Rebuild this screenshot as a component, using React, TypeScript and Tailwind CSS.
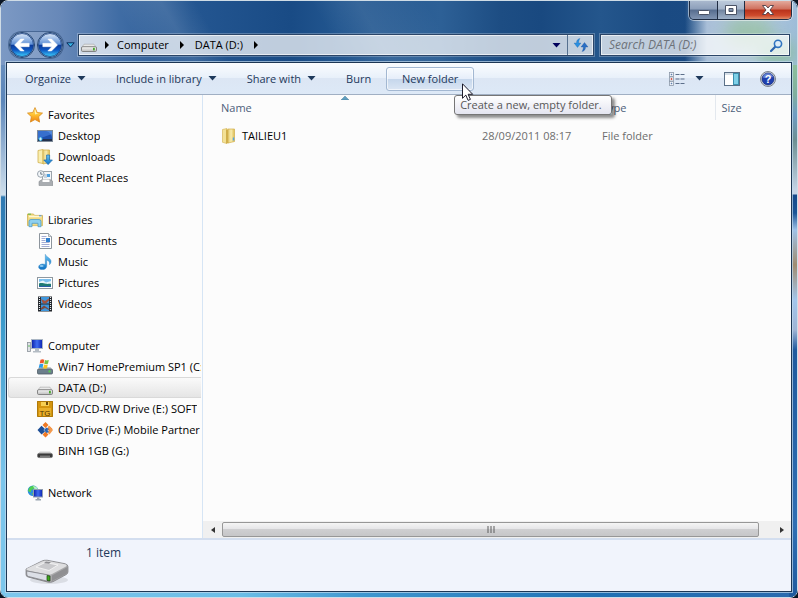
import type { ReactNode } from "react";

type NavItem = { label: string; icon: ReactNode; selected?: boolean };
type NavGroup = { label: string; icon: ReactNode; items: NavItem[] };

function Svg({ children }: { children: ReactNode }) {
  return (
    <svg viewBox="0 0 16 16" className="size-4 shrink-0" aria-hidden="true">
      {children}
    </svg>
  );
}

/* Shared gradients, referenced by id from the icons below */
function Defs() {
  return (
    <svg className="absolute size-0" aria-hidden="true">
      <defs>
        <linearGradient id="gold" x1="0" y1="0" x2="0" y2="1">
          <stop offset="0" stopColor="#fff3a0" />
          <stop offset="0.5" stopColor="#ffc02e" />
          <stop offset="1" stopColor="#f07f12" />
        </linearGradient>
        <linearGradient id="folder" x1="0" y1="0" x2="1" y2="0">
          <stop offset="0" stopColor="#e6cf78" />
          <stop offset="0.5" stopColor="#f8ebac" />
          <stop offset="1" stopColor="#dcbb50" />
        </linearGradient>
        <linearGradient id="sky" x1="0" y1="0" x2="0" y2="1">
          <stop offset="0" stopColor="#6cc6f5" />
          <stop offset="1" stopColor="#0e72c4" />
        </linearGradient>
        <linearGradient id="screen" x1="0" y1="0" x2="1" y2="0">
          <stop offset="0" stopColor="#0a1fa8" />
          <stop offset="0.5" stopColor="#3f6df0" />
          <stop offset="1" stopColor="#0b22b0" />
        </linearGradient>
        <linearGradient id="metal" x1="0" y1="0" x2="0" y2="1">
          <stop offset="0" stopColor="#f7f7f7" />
          <stop offset="1" stopColor="#bdbdbd" />
        </linearGradient>
        <linearGradient id="orbTop" x1="0" y1="0" x2="0" y2="1">
          <stop offset="0" stopColor="#dbe8f8" />
          <stop offset="0.47" stopColor="#5d8fd6" />
          <stop offset="0.5" stopColor="#0c3a99" />
          <stop offset="0.72" stopColor="#0e58c4" />
          <stop offset="1" stopColor="#3fd0fb" />
        </linearGradient>
      </defs>
    </svg>
  );
}

const StarIcon = () => (
  <Svg>
    <path d="M8 .6l2.2 4.9 5.3.6-3.9 3.6 1 5.4L8 12.5l-4.6 2.6 1-5.4L.5 6.1l5.3-.6z" fill="url(#gold)" stroke="#d98a1c" strokeWidth="0.8" />
    <path d="M8 2.4l1.5 3.8 2.2.4-3.7 1z" fill="#fffbd8" opacity="0.8" />
  </Svg>
);

const DesktopIcon = () => (
  <Svg>
    <rect x="0.5" y="2.5" width="15" height="11" fill="#1d4fae" stroke="#7f8b99" />
    <path d="M1 3h14v3L1 11z" fill="#3f77d4" opacity="0.8" />
    <path d="M9 3h6v8c0-4-2-7-6-8z" fill="#6ba0ea" opacity="0.5" />
    <rect x="1" y="11" width="14" height="2" fill="#23324d" />
    <circle cx="3.5" cy="11" r="2" fill="#35b1e8" />
    <path d="M3.5 9.5v3M2 11h3" stroke="#fff" strokeWidth="0.7" />
  </Svg>
);

const DownloadsIcon = () => (
  <Svg>
    <path d="M1 1.5L6 .5v14l-5-1z" fill="#f9eeb0" stroke="#d2b04c" strokeWidth="0.8" />
    <path d="M6 1h6.5v12.5L6 15z" fill="url(#folder)" stroke="#d2b04c" strokeWidth="0.8" />
    <path d="M9.6 6h3v5h2.8l-4.3 4.6L6.8 11h2.8z" fill="url(#sky)" stroke="#1767ae" strokeWidth="0.7" />
  </Svg>
);

const RecentIcon = () => (
  <Svg>
    <rect x="5.5" y="1.5" width="9" height="10" fill="#f4f6f8" stroke="#9ba3aa" />
    <path d="M7 5h3M7 7h3" stroke="#9ab0c4" />
    <rect x="10" y="4" width="3" height="3" fill="#4a9fe0" />
    <path d="M2 11.5l3-2h8l3 2v4H2z" fill="#a9adb1" stroke="#8a8e92" strokeWidth="0.6" />
    <path d="M5.5 9.500h7v2.5h-7z" fill="#fff" />
    <circle cx="3.8" cy="4" r="3.3" fill="#f2f6f9" stroke="#9aa4ad" />
    <path d="M3.8 2v2.2h1.8" fill="none" stroke="#4a5a68" strokeWidth="0.8" />
  </Svg>
);

const LibrariesIcon = () => (
  <Svg>
    <path d="M.5 2h6l1 1.4h8v10.2H.5z" fill="#f3dd86" stroke="#cfae4d" strokeWidth="0.8" />
    <path d="M2 4.5h12.4" stroke="#fdf8d6" strokeWidth="1.4" />
    <path d="M1 2.2h3" stroke="#5eb946" />
    <path d="M12 3.8h2.5" stroke="#4a8edb" />
    <path d="M.9 6.2h14.4v7H.9z" fill="#f1d982" />
    <path d="M2 14.7V9.5Q2 7.5 4 7.5h8q2 0 2 2v5.2h-3v-3.4H5v3.4z" fill="#8fd0ee" stroke="#4f9cc9" strokeWidth="0.8" />
  </Svg>
);

const DocumentIcon = () => (
  <Svg>
    <path d="M2.5.5h9l3 3v12h-12z" fill="#fff" stroke="#8d959d" />
    <path d="M11.5.5v3h3" fill="#dfe5ea" stroke="#8d959d" strokeWidth="0.7" />
    <path d="M4.5 3.5h5M4.5 5.5h4M4.5 7.5h4M4.5 9.5h8M4.5 11.5h8M4.5 13.5h8" stroke="#9aa4d0" strokeWidth="0.9" />
    <rect x="9" y="5" width="4" height="4" fill="#2f80cf" />
  </Svg>
);

const MusicIcon = () => (
  <Svg>
    <path d="M8.3.3c.5 2.6 4.800 3.400 5.600 6.200.4 1.600-.2 3.200-1.400 4.200.5-2.600-.6-4-2.800-4.700v6.200c0 2-1.900 3.400-4.400 3.400-2.400 0-3.700-1.200-3.700-2.600 0-1.800 2-3 4.100-3 1 0 1.900.2 2.600.5z" fill="url(#sky)" stroke="#2b7fbf" strokeWidth="0.4" />
    <ellipse cx="4.6" cy="12" rx="2" ry="1.1" fill="#b9e6fb" opacity="0.7" />
  </Svg>
);

const PicturesIcon = () => (
  <Svg>
    <rect x="0.5" y="2.5" width="15" height="11" fill="#fff" stroke="#8f989f" />
    <rect x="2" y="4" width="12" height="8" fill="#7cc0ee" />
    <path d="M2 7l4-1.5 3 2L14 6v3H2z" fill="#e8f5fb" />
    <path d="M2 8.5c2-1 5 0 7 .3s4-.3 5 .2v3H2z" fill="#1f7b74" />
    <path d="M2 11h12v1H2z" fill="#2a5ea8" />
  </Svg>
);

const VideosIcon = () => (
  <Svg>
    <rect x="1" y="0.5" width="14" height="15" fill="#23272c" />
    <path d="M2.5 1v14M13.5 1v14" stroke="#e6eaee" strokeWidth="1.2" strokeDasharray="1 1" />
    <rect x="4" y="1" width="8" height="6.5" fill="#3f97dd" />
    <rect x="4" y="8.5" width="8" height="6.5" fill="#3f97dd" />
    <path d="M4 3l4 2 4-2.500v2L9 7.500H6z" fill="#a3523f" />
    <path d="M4 12l3-2.500 5 3.500v1L8 12l-4 2z" fill="#7d4a40" />
  </Svg>
);

const ComputerIcon = () => (
  <Svg>
    <rect x="0.5" y="4.5" width="3" height="9" fill="#dfe3e6" stroke="#8b9299" strokeWidth="0.8" />
    <path d="M1.2 8h1.6" stroke="#3fae3a" strokeWidth="1.2" />
    <rect x="4.5" y="1.5" width="11" height="9" fill="url(#screen)" stroke="#aab6c4" />
    <path d="M8 11h4v2H8zM6 13h8v1.5H6z" fill="#b4bcc4" />
  </Svg>
);

const SystemDriveIcon = () => (
  <Svg>
    <path d="M2.5 8.2h11l2 2.6H.5z" fill="#aab4bc" />
    <rect x="0.5" y="10.2" width="15" height="4.8" rx="1" fill="#6c7f8c" stroke="#4f5c66" strokeWidth="0.8" />
    <rect x="11.5" y="11.4" width="2" height="2" fill="#58d44a" />
    <path d="M3.500 .8c1.500-.8 2.600-.7 3.800 0l-.8 3.700c-1.200-.7-2.400-.7-3.800 0z" fill="#f0562a" />
    <path d="M8 1.100c1.200.6 2.400.6 3.800 0L11 4.800c-1.400.6-2.600.6-3.800 0z" fill="#7cc142" />
    <path d="M2.500 5.200c1.400-.7 2.600-.7 3.800 0l-.8 3.700c-1.200-.7-2.400-.7-3.800 0z" fill="#2e9be6" />
    <path d="M7 5.500c1.300.6 2.500.6 3.800 0L10 9.200c-1.300.6-2.500.6-3.800 0z" fill="#fcc21f" />
  </Svg>
);

const DriveIcon = () => (
  <Svg>
    <path d="M3 7.200h10l2.500 3.600H.5z" fill="#e9e9e9" stroke="#a6a6a6" strokeWidth="0.6" />
    <rect x="0.5" y="9.700" width="15" height="4.800" rx="1.2" fill="url(#metal)" stroke="#7b7b7b" strokeWidth="0.9" />
    <rect x="12" y="10.800" width="1.800" height="2.600" fill="#46a92c" />
  </Svg>
);

const DvdIcon = () => (
  <Svg>
    <path d="M0 0h16v16H1l-1-1z" fill="#d4950e" />
    <path d="M4 0h8v5H4z" fill="#f7cf52" />
    <path d="M9 1h2v3H9z" fill="#6d4a08" />
    <path d="M2 7h12v9H2z" fill="#e9b02a" />
    <text x="8" y="14.500" textAnchor="middle" fontSize="8" fontFamily="Liberation Sans, sans-serif" fill="#4a3105">
      TG
    </text>
    <path d="M.5.5h15v15H.5z" fill="none" stroke="#b07a0a" />
  </Svg>
);

const CdIcon = () => (
  <Svg>
    <path d="M8.500 0l3 3-3 3-3-3zM12.500 4l3 3-3 3-2-3zM8.500 9.500l3 3-3 3-3-3z" fill="#f07a24" />
    <path d="M12 3.500L16 8l-3.500 4.500-2-2L13 8l-2.500-2.500z" fill="#f39a4e" />
    <path d="M4.500 3.800L8 7l-1.500 1L8 9.500l-3.500 3L0.500 8z" fill="#1f4f96" />
    <path d="M9.500 5.500L12 7l-1.500 1 1.500 2-2.500 1L7 8z" fill="#2b65b3" />
  </Svg>
);

const UsbIcon = () => (
  <Svg>
    <path d="M3 8.400h10l2.500 2.800H.5z" fill="#cfcfcf" />
    <rect x="0.500" y="10.400" width="15" height="4.200" rx="1.500" fill="#3a3a3a" stroke="#777" strokeWidth="0.8" />
    <path d="M3 13.200h10" stroke="#999" />
  </Svg>
);

const NetworkIcon = () => (
  <Svg>
    <circle cx="6" cy="5.800" r="5.300" fill="#2c8fe0" />
    <path d="M2 3c2-2 4-2.500 6-2L6.500 4l-2 1-1 2.500L1 6zM4.500 8l3 .5-1 2.500z" fill="#4fcf52" />
    <path d="M6 1c2 0 4 1 4.800 2.500L8 5z" fill="#b9f0c0" />
    <rect x="6.500" y="4.500" width="9" height="7.500" fill="url(#screen)" stroke="#8f9db0" />
    <path d="M10 12.500h2.500V14h1.500v1.500H8.500V14H10z" fill="#98a3b0" />
  </Svg>
);

const FolderIcon = () => (
  <Svg>
    <path d="M1.500 1.500L6 .5v15l-4.500-1.200z" fill="#f3e196" stroke="#d8b95c" strokeWidth="0.7" />
    <path d="M5 1.500h3V15l-3 .500z" fill="#cfae4a" />
    <path d="M7 1h6.500v12.500L7 15z" fill="url(#folder)" stroke="#d2b04c" strokeWidth="0.7" />
    <path d="M12.500 9.500v3" stroke="#4fa4e8" strokeWidth="1.400" />
  </Svg>
);

const Caret = ({ className }: { className: string }) => (
  <svg viewBox="0 0 9 5" className={`h-[5px] w-[9px] shrink-0 ${className}`} aria-hidden="true">
    <path d="M.5 0h8l-4 4.500z" fill="currentColor" />
  </svg>
);

const Chevron = () => (
  <svg viewBox="0 0 4 8" className="h-2 w-1 shrink-0" aria-hidden="true">
    <path d="M0 0v8l4-4z" fill="#000" />
  </svg>
);

const groups: NavGroup[] = [
  {
    label: "Favorites",
    icon: <StarIcon />,
    items: [
      { label: "Desktop", icon: <DesktopIcon /> },
      { label: "Downloads", icon: <DownloadsIcon /> },
      { label: "Recent Places", icon: <RecentIcon /> },
    ],
  },
  {
    label: "Libraries",
    icon: <LibrariesIcon />,
    items: [
      { label: "Documents", icon: <DocumentIcon /> },
      { label: "Music", icon: <MusicIcon /> },
      { label: "Pictures", icon: <PicturesIcon /> },
      { label: "Videos", icon: <VideosIcon /> },
    ],
  },
  {
    label: "Computer",
    icon: <ComputerIcon />,
    items: [
      { label: "Win7 HomePremium SP1 (C:)", icon: <SystemDriveIcon /> },
      { label: "DATA (D:)", icon: <DriveIcon />, selected: true },
      { label: "DVD/CD-RW Drive (E:) SOFT", icon: <DvdIcon /> },
      { label: "CD Drive (F:) Mobile Partner", icon: <CdIcon /> },
      { label: "BINH 1GB (G:)", icon: <UsbIcon /> },
    ],
  },
  { label: "Network", icon: <NetworkIcon />, items: [] },
];

const files = [{ name: "TAILIEU1", modified: "28/09/2011 08:17", type: "File folder" }];

function Wallpaper() {
  return (
    <div className="absolute inset-0 overflow-hidden bg-[#1d4f88]">
      {/* Side and bottom edges */}
      <div className="absolute inset-y-0 left-0 w-2 bg-[linear-gradient(180deg,#7d9bc4_0,#5b86ba_100px,#cfdfec_194px,#2f79b2_196px,#3b9acb_320px,#7cc6ec_480px,#7cc6ec_100%)]" />
      <div className="absolute inset-x-0 bottom-0 h-2 bg-[linear-gradient(90deg,#7cc6ec_0,#6bbde6_30%,#3f97cf_45%,#1f70b4_75%,#2a6aae_100%)]" />
      {/* Glass behind the title and address bars */}
      <div className="absolute inset-x-0 top-0 h-16 bg-[linear-gradient(90deg,#7c99c4_0,#6788b8_60px,#3f6ca4_120px,#245691_190px,#194b85_290px,#235790_340px,#2d6096_440px,#1d4d83_500px,#194980_540px,#24568c_600px,#1a4a82_660px,#1d4d86_100%)]" />
      <div className="absolute inset-x-0 top-0 h-16 bg-[linear-gradient(60deg,transparent_130px,#ffffff1c_170px,transparent_200px,transparent_300px,#ffffff14_340px,transparent_400px)]" />
      <div className="absolute top-0 right-0 h-16 w-28 bg-[linear-gradient(90deg,#a9bfd800_0,#a9bfd8_22px,#b6cbdf_70px,#9dbcd8_100%)]" />
      <div className="absolute top-4 right-6 h-8 w-12 rounded-full bg-[#93bf9a] opacity-70 blur-sm" />
      <div className="absolute top-10 right-0 h-6 w-10 rounded-full bg-[#8abf9a] opacity-80 blur-sm" />
      <div className="absolute top-16 right-0 bottom-0 w-2 bg-[linear-gradient(180deg,#8dc09c_0,#7fae9e_30px,#6f9cc4_50px,#6d8f92_75px,#c3d3e6_125px,#c3d3e6_129px,#14498a_130px,#1b5596_148px,#9fc2e8_165px,#a08c70_200px,#a3c6ec_235px,#9fb4d4_265px,#1f5a9e_285px,#2f6fb4_460px,#1f5a9e_100%)]" />
    </div>
  );
}

function CaptionButtons() {
  return (
    <div className="flex h-[19px] overflow-hidden rounded-b-[5px] border border-t-0 border-[#1f2c42] shadow-[0_0_0_1px_#ffffff80]">
      <button aria-label="Minimize" className="grid w-7 place-items-center border-r border-[#1f2c42] bg-[linear-gradient(180deg,#a9b8cd_0,#8c9fba_45%,#566c8e_50%,#8195b2_100%)]">
        <svg viewBox="0 0 12 5" className="mt-1 h-[5px] w-3">
          <rect x="0.5" y="0.5" width="11" height="4" rx="1" fill="#fff" stroke="#4b5365" />
        </svg>
      </button>
      <button aria-label="Maximize" className="grid w-[27px] place-items-center border-r border-[#1f2c42] bg-[linear-gradient(180deg,#bccadb_0,#a4b4c9_45%,#71849f_50%,#9fb1c8_100%)]">
        <svg viewBox="0 0 12 10" className="h-[10px] w-3">
          <path d="M.5.5h11v9H.5zM4 3.500v3h4v-3z" fill="#fff" fillRule="evenodd" stroke="#4b5365" />
        </svg>
      </button>
      <button aria-label="Close" className="grid w-[46px] place-items-center bg-[linear-gradient(180deg,#e3aa9d_0,#cf6f5d_45%,#b8321b_50%,#cf4a2c_80%,#e08a66_100%)]">
        <svg viewBox="0 0 12 10" className="h-[10px] w-3">
          <path d="M.5.500h3.300L6 3l2.200-2.500h3.300L8 5l3.500 4.500H8.200L6 7 3.800 9.500H.5L4 5z" fill="#fff" stroke="#4b3b45" strokeWidth="0.9" />
        </svg>
      </button>
    </div>
  );
}

function NavOrb({ label, flip }: { label: string; flip?: boolean }) {
  return (
    <button aria-label={label} className="size-[26px] shrink-0">
      <svg viewBox="0 0 26 26" className={flip ? "size-full -scale-x-100" : "size-full"}>
        <circle cx="13" cy="13" r="12.500" fill="#b9cce4" stroke="#21426f" />
        <circle cx="13" cy="13" r="11.500" fill="url(#orbTop)" stroke="#173d80" strokeWidth="0.8" />
        <path d="M5.500 13l6-6h3.700l-4 4.300h9v3.400h-9l4 4.300h-3.700z" fill="#fff" stroke="#fff" strokeWidth="0.500" strokeLinejoin="round" />
      </svg>
    </button>
  );
}

function AddressBar() {
  return (
    <div className="flex items-center gap-[3px] pr-0.5 pl-[3px]">
      <div className="flex h-[26px] items-center gap-0.5 rounded-full bg-white/15 shadow-[0_0_0_1px_#1f406c80]">
        <NavOrb label="Back" />
        <NavOrb label="Forward" flip />
      </div>
      <button aria-label="Recent pages" className="grid h-6 w-[9px] place-items-center">
        <svg viewBox="0 0 9 6" className="h-[6px] w-[9px]">
          <path d="M.8.800h7.400L4.500 5z" fill="#38b4e6" stroke="#0c2d5c" />
        </svg>
      </button>
      <div className="flex h-[22px] flex-1 items-stretch border border-[#2b4568] bg-white/72 shadow-[inset_0_0_0_1px_#ffffffa0,0_0_0_1px_#ffffff40]">
        <div className="flex flex-1 items-center pl-0.5">
          <DriveIcon />
          <button aria-label="Locations" className="grid w-4 place-items-center pl-1">
            <Chevron />
          </button>
          <button className="pl-1">Computer</button>
          <button aria-label="Computer contents" className="grid w-[26px] place-items-center">
            <Chevron />
          </button>
          <button>DATA (D:)</button>
          <button aria-label="DATA (D:) contents" className="grid w-[26px] place-items-center">
            <Chevron />
          </button>
        </div>
        <button aria-label="Previous locations" className="grid w-[21px] place-items-center">
          <Caret className="text-[#00005c]" />
        </button>
        <button aria-label="Refresh" className="grid w-[26px] place-items-center border-l border-[#56708f]">
          <svg viewBox="0 0 16 16" className="size-4">
            <path d="M7 1.500C4.500 2 3.500 3.500 3.500 6H1l3.500 4.500L8 6H5.700c0-1.800.3-3 1.300-4.500z" fill="#2a8fe0" stroke="#1c5fa8" strokeWidth="0.300" />
            <path d="M9 14.500c2.500-.5 3.500-2 3.500-4.500H15l-3.500-4.500L8 10h2.300c0 1.800-.3 3-1.300 4.500z" fill="#2a6fc4" stroke="#174f98" strokeWidth="0.300" />
          </svg>
        </button>
      </div>
      <label className="ml-[3px] flex h-[22px] w-[190px] items-center border border-[#2b4568] bg-white/72 pr-1.5 pl-2 shadow-[inset_0_0_0_1px_#ffffffa0,0_0_0_1px_#ffffff40]">
        <input
          type="search"
          aria-label="Search DATA (D:)"
          placeholder="Search DATA (D:)"
          className="w-full min-w-0 bg-transparent text-[12px] italic outline-none placeholder:text-[#6d7279]"
        />
        <svg viewBox="0 0 13 13" className="size-[13px] shrink-0">
          <path d="M1 12l4.500-4.500" stroke="#2d64ad" strokeWidth="2.200" strokeLinecap="round" />
          <circle cx="8" cy="4.800" r="3.600" fill="#dcecf8" stroke="#2f74c0" strokeWidth="1.600" />
        </svg>
      </label>
    </div>
  );
}

function Toolbar() {
  const menus = ["Organize", "Include in library", "Share with"];
  return (
    <div className="flex h-8 shrink-0 items-center border-b border-[#a0afc3] bg-[linear-gradient(180deg,#fafcfe_0,#e8f0fa_48%,#dce6f4_50%,#dde9f7_100%)] pl-[3px] text-[#1e395b]">
      {menus.map((menu) => (
        <button key={menu} className="flex items-center gap-1.5 px-[15px]">
          {menu}
          <Caret className="text-[#1e395b]" />
        </button>
      ))}
      <button className="px-[15px]">Burn</button>
      <div className="relative">
        <button
          aria-describedby="new-folder-tip"
          className="h-6 w-[88px] rounded-[3px] border border-[#a3b8d2] bg-[linear-gradient(180deg,#f8fbfe_0,#e6eefa_48%,#c6d7ec_52%,#dbe6f4_100%)] shadow-[inset_0_0_0_1px_#ffffffa0]"
        >
          New folder
        </button>
        <div
          id="new-folder-tip"
          role="tooltip"
          className="absolute top-7 left-[68px] z-10 flex h-5 w-[158px] items-center rounded-[3px] border border-[#767676] bg-linear-to-b from-white to-[#e4e5f0] pl-[5px] whitespace-nowrap text-[#575757] shadow-[3px_3px_3px_#00000070]"
        >
          Create a new, empty folder.
        </div>
        <svg viewBox="0 0 12 19" className="absolute top-4 left-[76px] z-20 h-[19px] w-3" aria-hidden="true">
          <path d="M.5.800v14.500l3.300-3.200 2.300 5.300 2.300-1-2.300-5.100h4.600z" fill="#fff" stroke="#1c1c2c" />
        </svg>
      </div>
      <div className="ml-auto flex items-center pr-[15px]">
        <button aria-label="Change your view">
          <svg viewBox="0 0 16 14" className="h-[14px] w-4">
            {[0.5, 5, 9.5].map((y, i) => (
              <g key={y}>
                <rect x="0.500" y={y} width="4" height="4" fill="#fff" stroke="#8a97a8" strokeWidth="0.8" />
                <rect x="1.700" y={y + 1.2} width="1.600" height="1.600" fill={i === 1 ? "#c0392b" : "#5d7fae"} />
                <path d={`M6.500 ${y + 2}h4M11.500 ${y + 2}h4`} stroke="#5c6f8a" />
              </g>
            ))}
          </svg>
        </button>
        <button aria-label="More view options" className="px-2.5">
          <Caret className="text-[#1e395b]" />
        </button>
        <button aria-label="Show the preview pane" className="ml-2.5">
          <svg viewBox="0 0 16 14" className="h-[14px] w-4">
            <rect x="0.500" y="0.500" width="15" height="13" fill="#fff" stroke="#5b7088" />
            <path d="M1 2h14" stroke="#c8d4e0" strokeWidth="1.500" />
            <rect x="9.500" y="1.500" width="5" height="11" fill="#7fd0e8" stroke="#3b8fae" />
          </svg>
        </button>
        <button aria-label="Get help" className="ml-5">
          <svg viewBox="0 0 16 16" className="size-4">
            <circle cx="8" cy="8" r="7.500" fill="#d5d9df" stroke="#6f7682" strokeWidth="0.9" />
            <circle cx="8" cy="8" r="6" fill="#1f3fae" stroke="#122a78" strokeWidth="0.7" />
            <path d="M2.800 6.500a5.300 5.300 0 0 1 10.400 0C10 5 6 8 2.800 6.500z" fill="#7d9be6" opacity="0.7" />
            <text x="8" y="12" textAnchor="middle" fontSize="11" fontWeight="700" fontFamily="Liberation Sans, sans-serif" fill="#fff">
              ?
            </text>
          </svg>
        </button>
      </div>
    </div>
  );
}

function NavPane() {
  return (
    <nav className="flex w-[196px] shrink-0 flex-col gap-[21px] border-r border-[#d6e5f5] pt-[9px] pr-px pl-px">
      {groups.map((group) => (
        <div key={group.label}>
          <a href="#" className="flex h-[21px] items-center gap-[5px] pl-[19px]">
            {group.icon}
            {group.label}
          </a>
          {group.items.map((item) => (
            <a
              key={item.label}
              href="#"
              className={
                item.selected
                  ? "flex h-[21px] items-center gap-[5px] rounded-l-[3px] border border-r-0 border-[#d9d9d9] bg-linear-to-b from-[#fafafa] to-[#e5e5e5] pl-7"
                  : "flex h-[21px] items-center gap-[5px] pl-[29px]"
              }
            >
              {item.icon}
              <span className="overflow-hidden whitespace-nowrap">{item.label}</span>
            </a>
          ))}
        </div>
      ))}
    </nav>
  );
}

function FileList() {
  return (
    <main className="flex min-w-0 flex-1 flex-col">
      <div className="flex-1 pl-2.5">
        <table className="w-full table-fixed text-left">
          <colgroup>
            <col />
            <col className="w-[120px]" />
            <col className="w-[120px]" />
            <col className="w-[76px]" />
          </colgroup>
          <thead className="text-[#4c607a]">
            <tr className="h-[25px]">
              <th className="relative pl-2 font-normal">
                Name
                <svg viewBox="0 0 8 4" className="absolute top-px left-[49%] h-1 w-2">
                  <path d="M4 0l4 4H0z" fill="#5f9fc0" stroke="#3c6f8d" strokeWidth="0.4" />
                </svg>
              </th>
              <th aria-label="Date modified" />
              <th className="pl-[7px] font-normal">Type</th>
              <th className="border-l border-[#e3e8ee] pl-1.5 font-normal">Size</th>
            </tr>
          </thead>
          <tbody>
            {files.map((file) => (
              <tr key={file.name} className="h-8 text-[#6d6d6d]">
                <td className="pl-2 text-black">
                  <span className="flex items-center gap-[5px]">
                    <FolderIcon />
                    {file.name}
                  </span>
                </td>
                <td className="pl-[7px]">{file.modified}</td>
                <td className="pl-[7px]">{file.type}</td>
                <td />
              </tr>
            ))}
          </tbody>
        </table>
      </div>

      {/* Horizontal scroll bar */}
      <div className="flex h-[17px] items-center bg-[#f0f0f0]">
        <button aria-label="Scroll left" className="grid w-[19px] place-items-center">
          <svg viewBox="0 0 4 6" className="h-1.5 w-1">
            <path d="M4 0v6L0 3z" fill="#333" />
          </svg>
        </button>
        <div className="mr-[14px] grid h-[15px] flex-1 place-items-center rounded-[2px] border border-[#979797] bg-[linear-gradient(180deg,#f5f5f5_0,#e6e6e8_45%,#cfcfd1_50%,#c6c6c8_100%)]">
          <svg viewBox="0 0 8 7" className="h-[7px] w-2">
            <path d="M1 0v7M4 0v7M7 0v7" stroke="#5c5c5c" />
          </svg>
        </div>
        <button aria-label="Scroll right" className="grid w-[18px] place-items-center">
          <svg viewBox="0 0 4 6" className="h-1.5 w-1">
            <path d="M0 0v6l4-3z" fill="#333" />
          </svg>
        </button>
      </div>
    </main>
  );
}

function DetailsPane() {
  return (
    <footer className="flex h-[53px] shrink-0 gap-4 border-t-2 border-[#d3deef] bg-[#f1f4fc] pl-[17px] text-[12px] text-[#1e395b]">
      <svg viewBox="0 0 46 30" className="mt-4 h-[30px] w-[46px]" aria-hidden="true">
        <ellipse cx="25" cy="24" rx="19" ry="4" fill="#00000018" />
        <path d="M2 13L18 5q2-1 5-.800l18 3.500q3 .800 3 3v5q0 2-2 3l-13 7q-2 1-5 .500L4 21q-2-.500-2-2.500z" fill="#a9a9ab" stroke="#77777a" strokeWidth="0.700" />
        <path d="M3 12.500L18 5.400q2-1 5-.600l18 3.500q3 1 .500 2.500L28 18q-2 1-5 .500L4 14.500q-2.500-.700-1-2z" fill="#dedee0" />
        <path d="M12 11l9-4.500 13 2.500-9 5.500z" fill="#c9c9cc" stroke="#f8f8f8" strokeWidth="0.800" />
        <path d="M22 5.500l5 .8-2 1.500-5-.8z" fill="#8e8e92" />
        <path d="M2.700 15l22 4v6.500L4.500 20.500Q2.700 20 2.700 18z" fill="#dcdfe6" stroke="#77777c" strokeWidth="0.700" />
        <path d="M28 19.500L43.500 11v4.500q0 1.500-1.500 2.500l-14 7z" fill="#8f8f92" />
        <path d="M23 19.500l3 .500v5l-3-.600z" fill="#3faa1e" stroke="#1c3d12" strokeWidth="0.700" />
      </svg>
      <p className="pt-[5px]">1 item</p>
    </footer>
  );
}

export default function App() {
  return (
    <div className="bg-[#0a1524]">
      <Defs />
      <div className="relative flex min-h-screen flex-col overflow-hidden rounded-lg border border-[#cfdce6] font-['Open_Sans','Noto_Sans',sans-serif] text-[11px] leading-4 text-black">
        <Wallpaper />
        <div className="relative flex flex-1 flex-col px-[5px] pb-[5px]">
          <header className="flex h-[61px] flex-col">
            <div className="flex justify-end">
              <CaptionButtons />
            </div>
            <div className="pt-3">
              <AddressBar />
            </div>
          </header>
          <div className="flex flex-1 flex-col border border-[#1c3654] bg-[#fcfcfc] shadow-[0_0_0_1px_#c4dbeeb0]">
            <Toolbar />
            <div className="flex flex-1">
              <NavPane />
              <FileList />
            </div>
            <DetailsPane />
          </div>
        </div>
      </div>
    </div>
  );
}
